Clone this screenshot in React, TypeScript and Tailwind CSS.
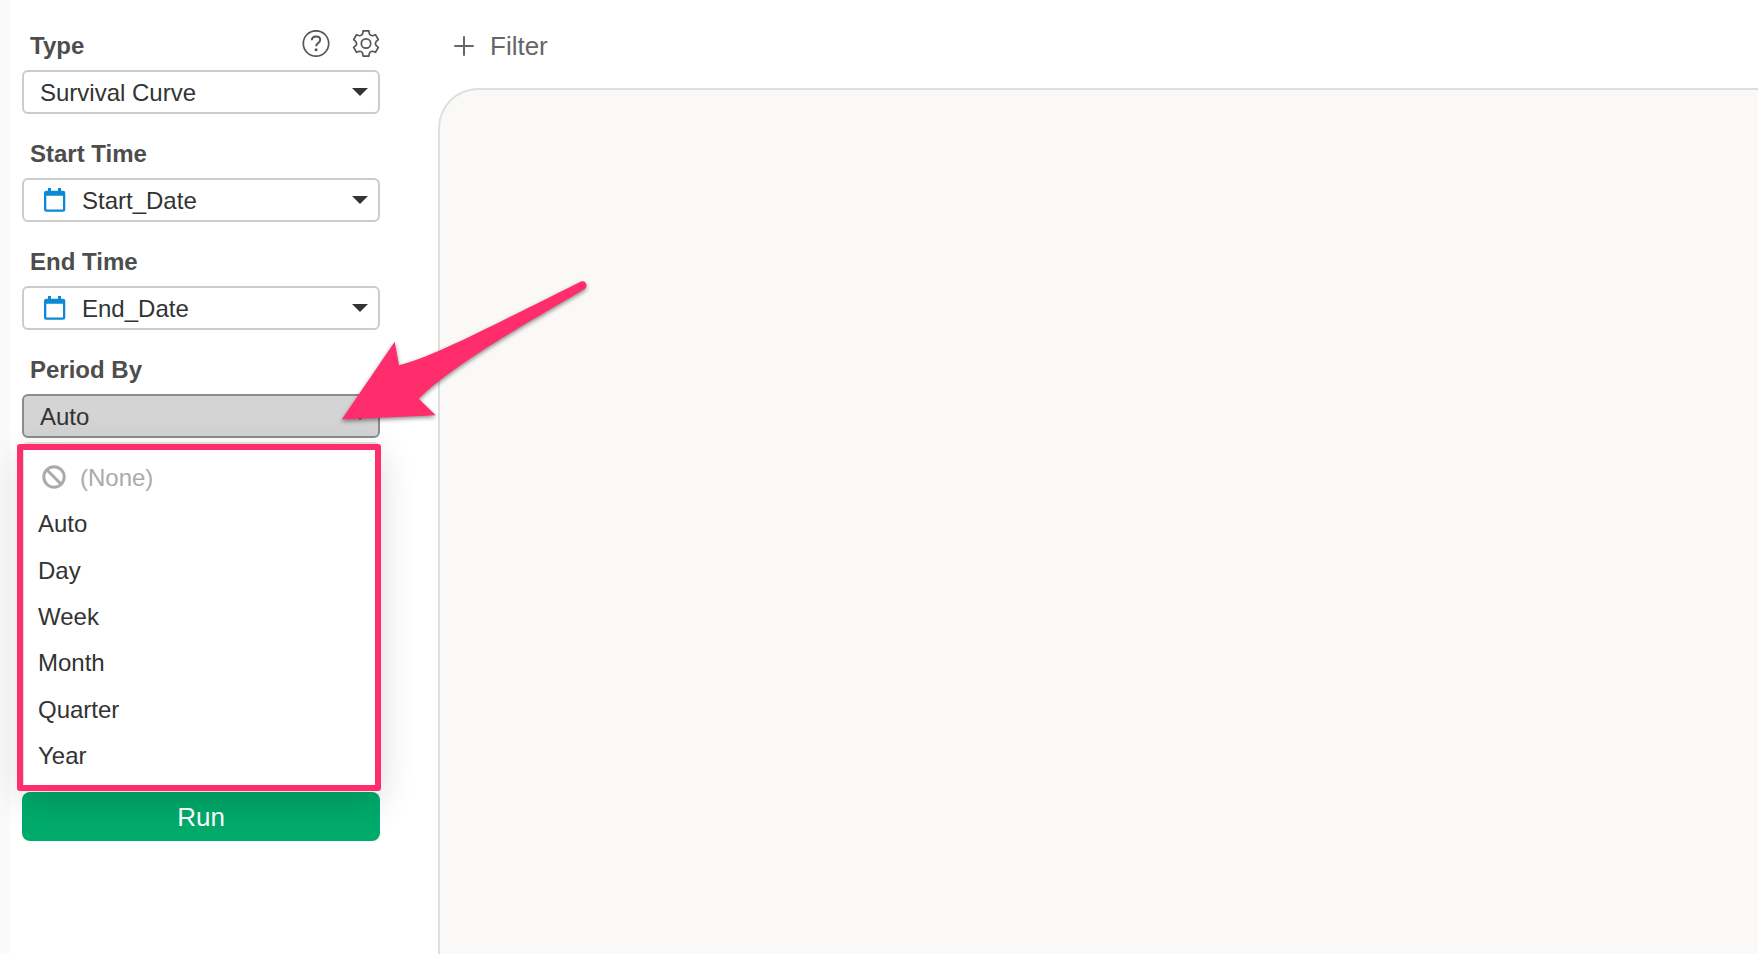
import { useState, type ReactNode } from "react";
import clsx from "clsx";

const PERIODS = ["Auto", "Day", "Week", "Month", "Quarter", "Year"];

// Six teeth, each given as [sideways, outwards] from the centre of the gear
const GEAR_PATH =
  [0, 60, 120, 180, 240, 300]
    .map((deg, i) => {
      const a = (deg * Math.PI) / 180;
      const at = (side: number, out: number) =>
        `${(14 + side * Math.cos(a) + out * Math.sin(a)).toFixed(2)} ${(13.5 + side * Math.sin(a) - out * Math.cos(a)).toFixed(2)}`;
      return `${i === 0 ? "M" : "A3.5 3.5 0 0 0 "}${at(-3.4, 9.6)}L${at(-2.9, 12.6)}L${at(2.9, 12.6)}L${at(3.4, 9.6)}`;
    })
    .join("") + "A3.5 3.5 0 0 0 10.6 3.9Z";

function HelpIcon() {
  return (
    <svg viewBox="0 0 28 28" className="h-7 w-7" fill="none" stroke="#555" strokeWidth="1.7">
      <circle cx="14" cy="13.5" r="12.7" />
      <path d="M9.8 10.2c.1-2.300 1.800-3.800 4.300-3.800 2.400 0 4.100 1.400 4.100 3.400 0 1.500-.8 2.400-2.100 3.300-1.400.9-1.900 1.600-1.900 3.100" strokeWidth="2" />
      <circle cx="14.1" cy="19.8" r="1.5" fill="#555" stroke="none" />
    </svg>
  );
}

function GearIcon() {
  return (
    <svg viewBox="0 0 28 28" className="h-7 w-7" fill="none" stroke="#555" strokeWidth="1.7" strokeLinejoin="round">
      <path d={GEAR_PATH} />
      <circle cx="14" cy="13.5" r="4.7" />
    </svg>
  );
}

function CalendarIcon() {
  return (
    <svg viewBox="0 0 22 24" className="h-6 w-[22px]" fill="#0b89d6">
      <path
        fillRule="evenodd"
        d="M4 0h3v2.700h7V0h3v2.700h2a2.300 2.300 0 0 1 2.300 2.300v16.500A2.300 2.300 0 0 1 19 23.800H2.300A2.300 2.300 0 0 1 0 21.500V5A2.300 2.300 0 0 1 2.300 2.700H4zM2.300 7.700V21.500H19V7.700z"
      />
    </svg>
  );
}

function BanIcon() {
  return (
    <svg viewBox="0 0 24 24" className="h-6 w-6" fill="none" stroke="#aaa" strokeWidth="3">
      <circle cx="12" cy="12" r="10.2" />
      <path d="M4.8 4.8l14.4 14.4" />
    </svg>
  );
}

function PlusIcon() {
  return (
    <svg viewBox="0 0 20 20" className="h-5 w-5" stroke="#666" strokeWidth="2" strokeLinecap="round">
      <path d="M10 1v18M1 10h18" />
    </svg>
  );
}

interface FieldProps {
  id: string;
  label: string;
  value: string;
  options: string[];
  icon?: ReactNode;
  actions?: ReactNode;
  open?: boolean;
  onChange?: (value: string) => void;
  children?: ReactNode;
}

function Field({ id, label, value, options, icon, actions, open, onChange, children }: FieldProps) {
  return (
    <div>
      <div className="mb-[6px] flex items-start justify-between">
        <label htmlFor={id} className="pl-2 text-[24px] leading-9 font-bold text-[#4d4d4d]">
          {label}
        </label>
        {actions}
      </div>
      <div className="relative">
        <select
          id={id}
          value={value}
          onChange={(e) => onChange?.(e.target.value)}
          className={clsx(
            "block h-11 w-full appearance-none rounded-md border-2 pt-[2px] pr-12 text-[24px] text-[#333] outline-none",
            icon ? "pl-[58px]" : "pl-4",
            open ? "border-[#8c8c8c] bg-[#d4d4d4]" : "border-[#ccc] bg-white"
          )}
        >
          {options.map((option) => (
            <option key={option}>{option}</option>
          ))}
        </select>
        {icon && <span className="pointer-events-none absolute top-[10px] left-[22px]">{icon}</span>}
        <svg viewBox="0 0 16 8" className="pointer-events-none absolute top-[18px] right-3 h-2 w-4" fill="#333">
          <path d="M0 0h16L8 8z" />
        </svg>
        {children}
      </div>
    </div>
  );
}

function PeriodMenu({ onSelect }: { onSelect: (value: string) => void }) {
  return (
    <div className="absolute inset-x-0 top-12 h-[348px] rounded-md border-2 border-[#ddd] bg-white py-[10px] shadow-[0_12px_36px_rgba(0,0,0,0.16)]">
      <ul className="flex h-full flex-col text-[24px] text-[#333]">
        <li className="flex-1">
          <button type="button" disabled className="flex h-full w-full items-center gap-[14px] pl-[18px] text-[#aaa]">
            <BanIcon />
            <span className="pt-[2px]">(None)</span>
          </button>
        </li>
        {PERIODS.map((period) => (
          <li key={period} className="flex-1">
            <button
              type="button"
              onClick={() => onSelect(period)}
              className="flex h-full w-full items-center pt-[2px] pl-[14px] text-left hover:bg-gray-100"
            >
              {period}
            </button>
          </li>
        ))}
      </ul>
      {/* Highlight around the open menu */}
      <div className="pointer-events-none absolute top-0 -right-[3px] -bottom-[3px] -left-[7px] rounded-[3px] border-6 border-[#ff2d6b]" />
    </div>
  );
}

function Pointer() {
  return (
    <svg
      viewBox="330 275 270 160"
      className="pointer-events-none absolute -top-[119px] left-[308px] h-[160px] w-[270px] max-w-none drop-shadow-[0_2px_2px_rgba(0,0,0,0.45)]"
      fill="#ff2d6b"
    >
      <path d="M341.7 419.6L394.7 341.7L399 365.3C430 358 490 327 580 282A4.2 4.2 0 0 1 584.700 289C545 313 455 362 418.700 398.700L435.700 415.300Z" />
    </svg>
  );
}

export default function App() {
  const [period, setPeriod] = useState("Auto");

  return (
    <div className="flex min-h-screen bg-white font-['Liberation_Sans',Arial,sans-serif]">
      <div className="w-[10px] shrink-0 bg-[#fafafa]" />

      <aside className="relative z-10 w-[428px] shrink-0 pt-7 pr-[58px] pl-3">
        <div className="flex flex-col gap-[22px]">
          <Field
            id="type"
            label="Type"
            value="Survival Curve"
            options={["Survival Curve"]}
            actions={
              <div className="flex h-8 items-center gap-[22px]">
                <button type="button" aria-label="Help">
                  <HelpIcon />
                </button>
                <button type="button" aria-label="Settings">
                  <GearIcon />
                </button>
              </div>
            }
          />
          <Field id="start" label="Start Time" value="Start_Date" options={["Start_Date"]} icon={<CalendarIcon />} />
          <Field id="end" label="End Time" value="End_Date" options={["End_Date"]} icon={<CalendarIcon />} />
          <Field id="period" label="Period By" value={period} options={PERIODS} onChange={setPeriod} open>
            <PeriodMenu onSelect={setPeriod} />
            <Pointer />
          </Field>
        </div>
        <button type="button" className="mt-[354px] h-[49px] w-full rounded-lg bg-[#00ab6b] pt-[2px] text-[26px] text-white">
          Run
        </button>
      </aside>

      <main className="flex min-w-0 flex-1 flex-col">
        <div className="flex h-[88px] items-start pt-7 pl-4">
          <button type="button" className="flex items-center gap-4 text-[26px] leading-9 text-[#666]">
            <PlusIcon />
            Filter
          </button>
        </div>
        <section className="flex-1 rounded-tl-[40px] border-t-2 border-l-2 border-[#dedfdf] bg-[#faf9f7]" />
      </main>
    </div>
  );
}
